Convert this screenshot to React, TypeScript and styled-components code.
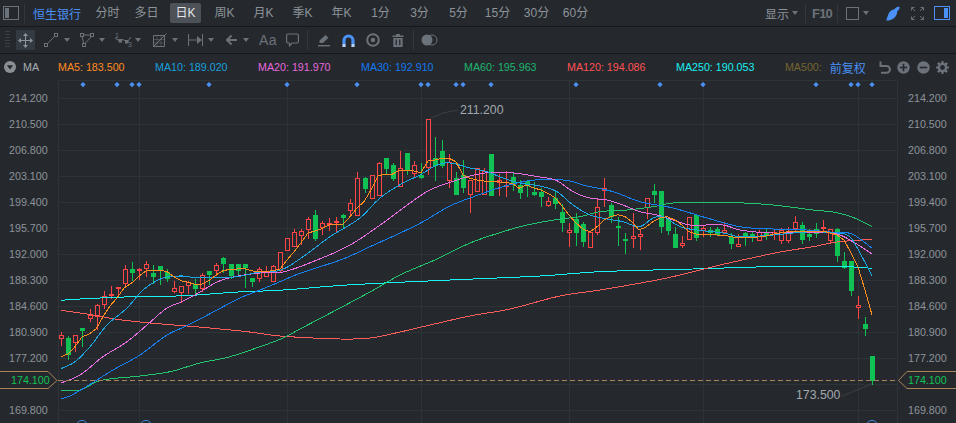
import React from 'react';
import styled, { createGlobalStyle } from 'styled-components';

const FONT = '"Liberation Sans", "Noto Sans CJK SC", Arial, sans-serif';
const BG = '#25292e';
const RULE = '#16181b';
const MUTED = '#8d9399';
const ICON = '#6c7279';
const BLUE = '#4a90f5';
const RED = '#ff4545';
const GREEN = '#10c254';

const Global = createGlobalStyle`
  html, body { margin: 0; padding: 0; background: ${BG}; }
  body { font-family: ${FONT}; overflow: hidden; }
`;

const Page = styled.div`
  position: relative;
  width: 956px;
  height: 423px;
  overflow: hidden;
  display: flex;
  flex-direction: column;
  background: ${BG};
  color: ${MUTED};
`;

const TopBar = styled.header`
  flex: 0 0 27px;
  box-sizing: border-box;
  display: flex;
  align-items: center;
  border-bottom: 1px solid ${RULE};
  padding-left: 3px;
  font-size: 12px;
`;

const PanelIcon = styled.svg<{ $left?: number }>`
  display: block;
  flex: none;
  margin-left: ${p => p.$left ?? 0}px;
`;

const Divider = styled.span<{ $left?: number; $right?: number }>`
  flex: none;
  width: 1px;
  height: 19px;
  background: #33383e;
  margin-left: ${p => p.$left ?? 0}px;
  margin-right: ${p => p.$right ?? 0}px;
`;

const StockName = styled.span`
  color: ${BLUE};
  width: 59px;
  flex: none;
`;

const Tabs = styled.nav`
  display: flex;
  gap: 8px;
`;

const Tab = styled.span<{ $active?: boolean }>`
  width: 31px;
  height: 20px;
  line-height: 20px;
  text-align: center;
  border-radius: 2px;
  white-space: nowrap;
  background: ${p => (p.$active ? '#4c5258' : 'transparent')};
  color: ${p => (p.$active ? '#e4e6e9' : MUTED)};
`;

const TopRight = styled.div`
  margin-left: auto;
  display: flex;
  align-items: center;
  padding-right: 6px;
`;

const Caret = styled.span<{ $left?: number; $right?: number }>`
  flex: none;
  width: 0;
  height: 0;
  border-left: 3.5px solid transparent;
  border-right: 3.5px solid transparent;
  border-top: 4px solid ${ICON};
  margin-left: ${p => p.$left ?? 0}px;
  margin-right: ${p => p.$right ?? 0}px;
`;

const ShowLabel = styled.span`
  color: ${MUTED};
`;

const F10 = styled.b`
  color: ${ICON};
  font-size: 13px;
  letter-spacing: -0.8px;
  width: 19px;
  margin: 0 6px;
`;

const Swatch = styled.span`
  flex: none;
  box-sizing: border-box;
  width: 13px;
  height: 13px;
  border: 1px solid ${ICON};
  margin-left: 8px;
`;

const ToolStrip = styled.div`
  flex: 0 0 27px;
  box-sizing: border-box;
  display: flex;
  align-items: center;
  border-bottom: 1px solid ${RULE};
`;

const Grip = styled.span`
  flex: none;
  box-sizing: border-box;
  width: 16px;
  height: 18px;
  background: repeating-linear-gradient(to bottom, #3b4046 0 1px, transparent 1px 3px);
  background-size: 5px 100%;
  background-position: 5px 0;
  background-repeat: no-repeat;
`;

const ActiveTool = styled.span`
  flex: none;
  width: 19px;
  height: 20px;
  margin-right: 9px;
  display: flex;
  align-items: center;
  justify-content: center;
  background: #343a41;
`;

const Slot = styled.span<{ $w: number }>`
  flex: 0 0 ${p => p.$w}px;
  display: flex;
  align-items: center;
`;

const Aa = styled.span`
  color: ${ICON};
  font-size: 14px;
  letter-spacing: 0.4px;
`;

const Sep = styled.span<{ $w: number }>`
  flex: 0 0 ${p => p.$w}px;
  height: 20px;
  background: linear-gradient(#33383e, #33383e) left center / 1px 100% no-repeat;
`;

const Legend = styled.div`
  flex: 0 0 26px;
  display: flex;
  align-items: center;
  padding-left: 4px;
  font-size: 10.7px;
  white-space: nowrap;
`;

const LegendName = styled.span`
  color: #a9aeb4;
  margin-left: 7px;
  width: 35px;
  flex: none;
`;

const LegendItems = styled.div`
  display: flex;
  gap: 30.5px;
`;

const LegendItem = styled.span<{ $color: string }>`
  color: ${p => p.$color};
`;

const Adjust = styled.span`
  color: ${BLUE};
  font-size: 12px;
  margin-left: 8px;
  flex: none;
`;

const LegendTools = styled.div`
  display: flex;
  align-items: center;
  gap: 6.5px;
  margin-left: 13px;
`;

const ChartRow = styled.div`
  flex: 1;
  min-height: 0;
  display: flex;
`;

const Axis = styled.div<{ $side: 'left' | 'right' }>`
  flex: none;
  box-sizing: border-box;
  width: ${p => (p.$side === 'left' ? 58 : 58)}px;
  padding-top: 5px;
  padding-left: ${p => (p.$side === 'left' ? 9 : 10)}px;
  display: grid;
  grid-auto-rows: 26px;
  align-content: start;
  font-size: 10.7px;
  line-height: 26px;
  color: ${MUTED};
`;

const Plot = styled.svg`
  flex: none;
  display: block;
`;

const Note = styled.text`
  font-family: ${FONT};
  font-size: 12.3px;
  fill: #a1a7ad;
`;

const PriceTag = styled.div<{ $side: 'left' | 'right' }>`
  position: absolute;
  z-index: 1;
  top: 371px;
  ${p => (p.$side === 'left' ? 'left: 0;' : 'right: 0;')}
  width: 58px;
  height: 18px;
  font-size: 10.7px;
  line-height: 18px;
  color: ${GREEN};
  box-sizing: border-box;
  padding-left: ${p => (p.$side === 'left' ? 11 : 10)}px;
`;

const TagShape = styled.svg`
  position: absolute;
  inset: 0;
  z-index: -1;
`;

type Candle = [number, number, number, number, 'r' | 'g'];
const candles: Candle[] = [
  [335.3, 339.3, 332, 346, 'r'], [338, 355, 336, 360, 'g'], [334.7, 342.7, 334.7, 351.7, 'r'], [328, 331, 328, 347, 'g'],
  [314.7, 319.3, 309, 322, 'r'], [305, 317, 304, 330, 'r'], [295.7, 304.7, 291, 309, 'r'], [293.7, 295, 286, 299, 'r'],
  [286.7, 288.3, 286.7, 296, 'r'], [269.3, 284.3, 265, 286.7, 'r'], [269, 272.7, 262, 281, 'g'], [269.3, 271.3, 267.7, 280, 'r'],
  [264.3, 269.3, 261, 276.7, 'r'], [273, 277, 265, 284, 'g'], [266.3, 271.3, 266.3, 285, 'g'], [272.3, 278.7, 269, 281.7, 'g'],
  [288.3, 292, 281, 292.7, 'r'], [286.3, 293, 286, 302.7, 'r'], [282.3, 286.3, 280.7, 294, 'r'], [284.3, 289, 279, 294, 'g'],
  [275.3, 288.7, 272.7, 291.7, 'r'], [271.3, 275, 271, 285, 'g'], [265, 271.3, 263.3, 276.3, 'r'], [258, 264.3, 257.3, 273, 'g'],
  [264, 275.7, 264, 279, 'g'], [264, 270.7, 264, 276, 'g'], [264, 268.3, 264, 288, 'g'], [278.3, 282, 278, 287, 'g'],
  [268.7, 278.7, 267.3, 282, 'r'], [271.3, 276.7, 266, 276.7, 'r'], [266.3, 281.7, 265, 281.7, 'r'], [252.3, 270.7, 252.3, 272, 'r'],
  [238.3, 250.7, 238.3, 250.7, 'r'], [232.3, 246.7, 229, 246.7, 'r'], [231.3, 236.3, 229, 245, 'r'], [219.3, 229.7, 217.3, 239, 'r'],
  [215, 238.7, 210, 240.7, 'g'], [223.3, 227.7, 220.7, 235, 'r'], [222.7, 225, 218, 230.7, 'r'], [221.3, 222.5, 217, 233, 'r'],
  [215, 217.7, 214, 227.7, 'g'], [203.3, 211.3, 199, 215, 'r'], [178.3, 215.7, 172, 215.7, 'r'], [178, 188.7, 177, 192.7, 'g'],
  [175.3, 198.7, 175.3, 198.7, 'r'], [163.3, 195.7, 161.7, 195.7, 'r'], [158.3, 168.7, 158.3, 174, 'g'], [165.3, 179, 162.7, 181, 'g'],
  [167.7, 187.3, 151, 187.3, 'r'], [153.3, 171.3, 153.3, 175, 'g'], [165.3, 174.3, 161, 178.3, 'r'], [175.3, 178, 162.7, 179.3, 'g'],
  [119.3, 168.3, 119.3, 175, 'r'], [158, 165.7, 137, 181, 'g'], [151, 165.7, 140, 168.3, 'g'], [161.7, 181, 154.3, 188, 'r'],
  [178, 195, 172, 195, 'g'], [175.3, 188, 160, 193.3, 'g'], [180, 195, 180, 212.7, 'r'], [168.3, 191.7, 168.3, 191.7, 'r'],
  [170.7, 195, 168.3, 195, 'r'], [154, 196, 154, 196, 'g'], [180, 183.3, 174, 196, 'r'], [185.3, 187, 170.7, 196.7, 'r'],
  [177.3, 185, 171.7, 191, 'g'], [185, 192.7, 180, 199, 'g'], [181.3, 186, 181, 196.7, 'g'], [192.3, 195.3, 181.7, 196, 'g'],
  [191.7, 196.7, 188, 206.7, 'g'], [200.7, 205.7, 196.7, 206.7, 'r'], [198, 204, 191.7, 208.7, 'g'], [212.3, 222.7, 204, 231.7, 'g'],
  [230.3, 233.3, 222.7, 246.7, 'r'], [219.3, 232.7, 213, 246, 'g'], [224.3, 242, 222.3, 246.7, 'g'], [231.7, 247.7, 231.7, 247.7, 'r'],
  [207.3, 232.7, 199, 235, 'r'], [188.3, 191.3, 178, 206.7, 'r'], [205.3, 217, 203, 223, 'g'], [225.5, 226.5, 216.7, 246, 'g'],
  [238.5, 239.5, 233.3, 254, 'g'], [236.3, 238.7, 213.3, 248.3, 'r'], [234.3, 236.7, 230, 250, 'r'], [198.3, 208.3, 198.3, 219, 'r'],
  [191, 195, 184, 203.3, 'g'], [191, 227, 191, 232.7, 'g'], [219, 231, 216.7, 235, 'g'], [234, 247.7, 227.3, 247.7, 'g'],
  [243.3, 246, 236, 247.7, 'r'], [217.3, 240.3, 217.3, 240.3, 'r'], [214.7, 238.3, 214.7, 240.7, 'g'], [228.3, 230.7, 225, 236.7, 'r'],
  [230, 233, 226.7, 236.7, 'g'], [229.3, 234.7, 226.7, 234.7, 'g'], [230, 233.3, 221.7, 233.3, 'r'], [237, 243.7, 233.3, 248.7, 'g'],
  [243.7, 247.3, 234.3, 247.3, 'r'], [233.3, 238.3, 231.7, 246, 'g'], [234, 236.7, 230.7, 241.7, 'g'], [231.7, 240.7, 230, 240.7, 'r'],
  [231.7, 236, 229.3, 240, 'g'], [231.7, 235.3, 229.3, 240, 'r'], [230, 240.7, 228, 244, 'r'], [232, 240.7, 226.7, 242.7, 'r'],
  [221.7, 229.3, 216, 231.7, 'r'], [225, 240, 221.7, 244, 'g'], [234.3, 237, 229.3, 240.7, 'g'], [229.3, 233.7, 222.7, 238.3, 'g'],
  [227.3, 228.7, 220, 231.7, 'r'], [229.3, 240.7, 229.3, 244, 'r'], [229.3, 255.7, 228.3, 261.7, 'g'], [261, 268.3, 252.3, 269.3, 'g'],
  [261, 291, 261, 296, 'g'], [305.3, 307.7, 296, 318.7, 'r'], [324, 328.7, 317.3, 336, 'g'], [356, 380.7, 356, 385, 'g'],
];

type Pt = [number, number];

// The averages are read off at a few anchors; sample them once per candle so the curves stay smooth.
const smooth = (pts: Pt[]): Pt[] => {
  const out: Pt[] = [];
  for (let i = 0; i < pts.length - 1; i++) {
    const p0 = pts[Math.max(0, i - 1)];
    const p1 = pts[i];
    const p2 = pts[i + 1];
    const p3 = pts[Math.min(pts.length - 1, i + 2)];
    const m1 = (p2[1] - p0[1]) / (p2[0] - p0[0] || 1);
    const m2 = (p3[1] - p1[1]) / (p3[0] - p1[0] || 1);
    const dx = p2[0] - p1[0];
    const n = Math.max(1, Math.round(dx / 4));
    for (let k = 0; k < n; k++) {
      const t = k / n;
      const t2 = t * t;
      const t3 = t2 * t;
      const y = (2 * t3 - 3 * t2 + 1) * p1[1] + (t3 - 2 * t2 + t) * dx * m1 + (-2 * t3 + 3 * t2) * p2[1] + (t3 - t2) * dx * m2;
      out.push([p1[0] + dx * t, y]);
    }
  }
  out.push(pts[pts.length - 1]);
  return out;
};

const ma5: Pt[] = [[61,356.7],[68,354],[75,346.7],[82,337],[89,334],[96,329],[103,316.7],[110,306],[117,298],[124,288],[132,282.7],[139,276],[146,271],[153,270],[160,270],[167,271.7],[174,276.7],[181,280.7],[188,282.3],[195,284.3],[202,284],[209,280.7],[216,275],[223,270.7],[230,269.3],[237,269],[244,268.3],[251,270.7],[258,272],[267,271.3],[274,270.7],[280,269],[287,260],[294,251.7],[301,242.7],[308,233],[315,231],[322,228.7],[329,225],[336,224.3],[343,224],[350,216.7],[357,208],[364,201.7],[371,190],[378,176],[385,174],[392,174.3],[400,170],[407,170.7],[414,171],[421,172.7],[428,160.7],[435,160],[442,158.3],[449,158.3],[456,161.7],[463,175],[470,178.3],[477,180],[484,181],[491,181.7],[498,181.7],[505,182.7],[512,183.3],[519,188.3],[526,185],[533,187.7],[541,190],[548,193.3],[555,197.7],[562,206],[569,215],[576,223],[583,229],[590,232],[597,226.7],[604,220],[611,216.7],[618,214.7],[625,216.7],[632,221.7],[639,230],[646,227],[653,221.7],[660,218],[667,216.7],[675,220],[682,225],[689,231.7],[696,234],[703,235],[710,234],[717,235],[724,235],[731,236.7],[738,237.7],[752,237.7],[766,236],[780,232.7],[794,231],[808,231],[823,231],[837,235],[844,240],[851,253],[858,267],[865,290],[872,315]];
const ma10: Pt[] = [[61,368.7],[75,361.7],[90,346.7],[107,325],[127,308],[143,290],[163,278],[183,276],[195,277.7],[216,277.7],[237,276.7],[258,272.3],[281,270],[303,256.7],[330,236.7],[360,218],[380,198],[403,183],[420,175],[437,165],[450,163],[470,168],[487,171.7],[503,178],[520,183],[540,186],[557,191.7],[573,205],[590,215],[607,219],[623,221.7],[640,226.7],[653,218],[663,216.7],[680,226.7],[697,230],[723,233],[740,236.7],[773,235],[807,232],[837,233],[850,236.7],[860,253],[872,275.7]];
const ma20: Pt[] = [[61,383],[80,375],[103,356.7],[127,341.7],[147,325],[167,308],[182,301.7],[200,292],[217,282],[233,277],[260,273],[283,272],[317,260],[350,245],[383,223],[410,203],[430,190],[457,180],[483,173.3],[510,172.7],[540,177],[557,180.7],[573,191.7],[590,198],[607,200],[623,205],[640,211.7],[657,215],[673,220],[690,225],[723,225],[740,230],[773,233],[807,232],[837,234],[855,243],[872,254]];
const ma30: Pt[] = [[61,399],[72,395],[97,380],[113,370],[140,355],[167,335],[187,325.7],[217,310],[240,298],[260,290],[280,281.7],[300,273.3],[343,259],[370,246.7],[403,231.7],[423,221.7],[450,206],[483,193.3],[503,186.7],[527,181],[550,179.3],[570,181],[583,185],[613,191.7],[640,201.7],[673,208],[707,218],[740,226.7],[773,229],[807,230],[837,232.7],[852,234],[872,248]];
const ma60: Pt[] = [[61,391],[80,390],[100,380.7],[140,376],[170,371.7],[200,363],[230,356.7],[260,346.7],[283,338],[300,329],[340,308],[370,292],[400,275],[437,259],[470,243],[503,231.7],[527,225],[560,219],[580,216.7],[600,211.7],[627,210],[653,206.7],[673,203],[700,202.3],[737,202.7],[773,205],[813,210],[837,212.7],[857,219],[872,226.7]];
const ma120: Pt[] = [[61,310.3],[93,315],[117,319.3],[150,323],[187,326],[217,328.7],[247,331.7],[277,335.7],[300,337.3],[340,339],[370,338],[400,332],[430,325],[470,316],[510,309],[560,296],[600,290],[662,279],[693,271.7],[720,265],[753,257.7],[780,252],[813,246.7],[837,242],[872,239.3]];
const ma250: Pt[] = [[61,300.3],[80,299],[133,296.7],[185,295.7],[233,292.3],[283,290],[347,285],[450,280],[540,276],[600,271.7],[693,269],[770,266.7],[840,266.3],[872,268.3]];

const lines: { pts: Pt[]; color: string }[] = [
  { pts: smooth(ma250), color: '#18f2f2' },
  { pts: smooth(ma120), color: '#ff5c5c' },
  { pts: smooth(ma60), color: '#22c46e' },
  { pts: smooth(ma30), color: '#1681f2' },
  { pts: smooth(ma20), color: '#e86fe0' },
  { pts: smooth(ma10), color: '#1ba6e6' },
  { pts: ma5, color: '#ff9020' },
];

const legendItems = [
  ['MA5: 183.500', '#ff8a1f'],
  ['MA10: 189.020', '#1a9fdc'],
  ['MA20: 191.970', '#e468dc'],
  ['MA30: 192.910', '#1478ee'],
  ['MA60: 195.963', '#1fb56e'],
  ['MA120: 194.086', '#ff5252'],
  ['MA250: 190.053', '#18eeee'],
  ['MA500:', '#76642f'],
];

const tabs = ['分时', '多日', '日K', '周K', '月K', '季K', '年K', '1分', '3分', '5分', '15分', '30分', '60分'];
const prices = ['214.200', '210.500', '206.800', '203.100', '199.400', '195.700', '192.000', '188.300', '184.600', '180.900', '177.200', '', '169.800'];
const gridY = [98, 124, 150, 176, 202, 228, 254, 280, 306, 332, 358, 384, 410];
const gridX = [58, 139, 287, 421, 569, 703, 858];
const dots = [83, 117, 132, 139, 209, 287, 357, 421, 428, 456, 463, 491, 576, 660, 703, 816, 851, 858, 872];
const splitMarks = [82, 146, 872];

const Axes = ({ side }: { side: 'left' | 'right' }) => (
  <Axis $side={side}>
    {prices.map((p, i) => (
      <span key={i}>{p}</span>
    ))}
  </Axis>
);

const Chart = () => (
  <Plot width={840} height={343} viewBox="58 80 840 343">
    <g shapeRendering="crispEdges" stroke="#2e3338" strokeWidth={1}>
      <line x1={58} x2={898} y1={80.5} y2={80.5} />
      {gridY.map(y => (
        <line key={y} x1={58} x2={898} y1={y + 0.5} y2={y + 0.5} />
      ))}
      {gridX.map(x => (
        <line key={x} x1={x + 0.5} x2={x + 0.5} y1={80} y2={423} />
      ))}
      <line x1={897.5} x2={897.5} y1={80} y2={423} />
    </g>
    {dots.map(x => (
      <path key={x} d={`M${x} 82 l2.6 2.6 -2.6 2.6 -2.6 -2.6z`} fill={BLUE} />
    ))}
    <g shapeRendering="crispEdges">
      {candles.map(([t, b, wt, wb, c], i) => {
        const x = Math.round(61.3 + 7.052 * i);
        const color = c === 'r' ? RED : GREEN;
        const top = Math.round(t);
        const bottom = Math.max(Math.round(b), top + 2);
        return (
          <g key={i}>
            <line x1={x + 0.5} x2={x + 0.5} y1={Math.round(wt)} y2={top} stroke={color} />
            <line x1={x + 0.5} x2={x + 0.5} y1={bottom} y2={Math.round(wb)} stroke={color} />
            {c === 'r' ? (
              <rect x={x - 1.5} y={top + 0.5} width={4} height={bottom - top - 1} fill={BG} stroke={color} />
            ) : (
              <rect x={x - 2} y={top} width={5} height={bottom - top} fill={color} />
            )}
          </g>
        );
      })}
    </g>
    <g fill="none" shapeRendering="crispEdges">
      {lines.map(l => (
        <polyline key={l.color} points={l.pts.map(p => p.join(',')).join(' ')} stroke={l.color} strokeWidth={1} />
      ))}
    </g>
    <line x1={58} x2={898} y1={380.5} y2={380.5} stroke="#a9855c" strokeDasharray="5 3" shapeRendering="crispEdges" />
    <path d="M431 118 L443 113 L458 110" stroke="#3b4046" fill="none" />
    <path d="M842 396 L872 384" stroke="#3b4046" fill="none" />
    <Note x={460} y={114}>211.200</Note>
    <Note x={796} y={399}>173.500</Note>
    {splitMarks.map(x => (
      <circle key={x} cx={x} cy={426} r={5.6} fill="none" stroke="#3f86d8" />
    ))}
  </Plot>
);

const LineTool = () => (
  <svg width="14" height="14" viewBox="0 0 14 14" fill="none" stroke={ICON}>
    <rect x="0.5" y="10.5" width="3" height="3" />
    <rect x="10.5" y="0.5" width="3" height="3" />
    <path d="M3.5 10.5 L10.5 3.5" />
  </svg>
);
const PolyTool = () => (
  <svg width="14" height="14" viewBox="0 0 14 14" fill="none" stroke={ICON}>
    <rect x="0.5" y="0.5" width="3" height="3" />
    <rect x="10.5" y="0.5" width="3" height="3" />
    <rect x="2.5" y="10.5" width="3" height="3" />
    <path d="M3.5 2 H10.5 M2 3.5 L3.8 10.5 M11.5 3.5 L5 10.5" />
  </svg>
);
const WaveTool = () => (
  <svg width="18" height="16" viewBox="0 0 18 16" fill="none" stroke={ICON}>
    <text x="0" y="6" fontSize="7" fill={ICON} stroke="none" fontFamily="Liberation Sans">1</text>
    <text x="13" y="15" fontSize="7" fill={ICON} stroke="none" fontFamily="Liberation Sans">3</text>
    <path d="M0 6 L5 9 L8 7.5 L12 10 L16 5" />
    <rect x="4" y="7.5" width="2.5" height="2.5" fill={ICON} />
    <rect x="10.5" y="8.5" width="2.5" height="2.5" fill={ICON} />
  </svg>
);
const FibTool = () => (
  <svg width="16" height="16" viewBox="0 0 16 16" fill="none" stroke={ICON}>
    <path d="M1.5 3.5 V14.5 H12.5 V3.5 H1.5" />
    <path d="M1.5 14.5 L14.5 1.5" />
    <path d="M1.5 7.5 H12.5 M1.5 11 H12.5 M5 3.5 V14.5 M9 3.5 V14.5" strokeDasharray="1 1" />
  </svg>
);
const MeasureTool = () => (
  <svg width="15" height="12" viewBox="0 0 15 12" fill="none" stroke={ICON}>
    <path d="M0.5 0 V12 M14.5 0 V12 M1 6 H10" />
    <path d="M9 2 L14 6 L9 10Z" fill={ICON} stroke="none" />
  </svg>
);
const BackArrow = () => (
  <svg width="12" height="12" viewBox="0 0 12 12" fill="none" stroke={ICON} strokeWidth="2">
    <path d="M12 6 H2 M6.5 1.5 L2 6 L6.5 10.5" />
  </svg>
);
const Comment = () => (
  <svg width="13" height="14" viewBox="0 0 13 14" fill="none" stroke={ICON} strokeWidth="1.2">
    <path d="M2 1 H11 Q12.4 1 12.4 2.4 V8.6 Q12.4 10 11 10 H6 L3.5 13 V10 H2 Q0.6 10 0.6 8.6 V2.4 Q0.6 1 2 1Z" />
  </svg>
);
const Pencil = () => (
  <svg width="12" height="13" viewBox="0 0 12 13" fill={ICON}>
    <path d="M7.5 1 L10.5 3.8 L5 9 H1.5 V6.6Z" />
    <rect x="0" y="11" width="12" height="1.4" />
  </svg>
);
const Magnet = () => (
  <svg width="13" height="13" viewBox="0 0 13 13" fill="none">
    <path d="M2 10 V6.5 A4.5 4.5 0 0 1 11 6.5 V10" stroke={BLUE} strokeWidth="3.2" />
    <path d="M0.4 10 H3.6 V13 H0.4Z M9.4 10 H12.6 V13 H9.4Z" fill="#b8d2f7" />
  </svg>
);
const Eye = () => (
  <svg width="14" height="14" viewBox="0 0 14 14" fill="none">
    <circle cx="7" cy="7" r="5.8" stroke={ICON} strokeWidth="2" />
    <circle cx="7" cy="7" r="2.2" fill={ICON} />
  </svg>
);
const Trash = () => (
  <svg width="12" height="13" viewBox="0 0 12 14" fill={ICON}>
    <path d="M4 0 H8 V1.5 H12 V3.2 H0 V1.5 H4Z" />
    <path d="M1 4.2 H11 V14 H1Z M3.4 6 V12 H4.8 V6Z M7.2 6 V12 H8.6 V6Z" fillRule="evenodd" />
  </svg>
);
const ToggleCircles = () => (
  <svg width="17" height="12" viewBox="0 0 17 12">
    <circle cx="6" cy="6" r="5.5" fill={ICON} />
    <circle cx="11" cy="6" r="5" fill="none" stroke={ICON} />
  </svg>
);
const MoveTool = () => (
  <svg width="15" height="15" viewBox="0 0 15 15" fill="#8d949b" stroke="#8d949b">
    <path d="M7.5 2 V13 M2 7.5 H13" fill="none" />
    <path d="M7.5 0 L10 3 H5Z M7.5 15 L10 12 H5Z M0 7.5 L3 5 V10Z M15 7.5 L12 5 V10Z" stroke="none" />
  </svg>
);

const Undo = () => (
  <svg width="12" height="13" viewBox="0 0 12 13" fill="none" stroke={ICON} strokeWidth="2">
    <path d="M1.5 0.5 V5 H6 M1.5 5 H7.5 A3.4 3.4 0 0 1 7.5 11.8 H2" />
  </svg>
);
const RoundBtn = ({ plus }: { plus?: boolean }) => (
  <svg width="13" height="13" viewBox="0 0 13 13">
    <circle cx="6.5" cy="6.5" r="6.2" fill={ICON} />
    <path d={plus ? 'M2.8 6.5 H10.2 M6.5 2.8 V10.2' : 'M2.8 6.5 H10.2'} stroke={BG} strokeWidth="1.7" />
  </svg>
);
const Gear = () => (
  <svg width="13" height="13" viewBox="0 0 13 13">
    <circle cx="6.5" cy="6.5" r="3.6" fill="none" stroke={ICON} strokeWidth="2.4" />
    <path
      d="M6.5 0 V2.5 M6.5 10.5 V13 M0 6.5 H2.5 M10.5 6.5 H13 M1.9 1.9 L3.7 3.7 M9.3 9.3 L11.1 11.1 M1.9 11.1 L3.7 9.3 M9.3 3.7 L11.1 1.9"
      stroke={ICON}
      strokeWidth="2.2"
    />
  </svg>
);

const App = () => (
  <>
    <Global />
    <Page>
      <TopBar>
        <PanelIcon width="16" height="14" viewBox="0 0 16 14" fill="none" stroke={ICON}>
          <rect x="0.5" y="0.5" width="15" height="13" />
          <rect x="2" y="2" width="4" height="10" fill={ICON} stroke="none" />
        </PanelIcon>
        <Divider $left={5} $right={8} />
        <StockName>恒生银行</StockName>
        <Tabs>
          {tabs.map(t => (
            <Tab key={t} $active={t === '日K'}>{t}</Tab>
          ))}
        </Tabs>
        <TopRight>
          <ShowLabel>显示</ShowLabel>
          <Caret $left={3} $right={7} />
          <Divider />
          <F10>F10</F10>
          <Divider />
          <Swatch />
          <Caret $left={4} $right={17} />
          <PanelIcon width="14" height="15" viewBox="0 0 14 15" fill={BLUE}>
            <path d="M13.6 1 C13.6 3 12.6 4.4 11.2 5 C11.6 8.6 8.6 13 4.4 14 C2.6 14.5 1 14.6 0.2 14.4 C0.8 13 1.2 11.4 2 9 C3 5.8 5.6 3.4 8.6 3.2 C9.6 1.4 11.6 0.2 13.6 1Z" />
          </PanelIcon>
          <PanelIcon $left={11} width="13" height="13" viewBox="0 0 13 13" fill="none" stroke={ICON}>
            <path d="M0.5 3.5 V0.5 H3.5 M9.5 0.5 H12.5 V3.5 M12.5 9.5 V12.5 H9.5 M3.5 12.5 H0.5 V9.5 M1 1 L4 4 M12 1 L9 4 M12 12 L9 9 M1 12 L4 9" />
          </PanelIcon>
          <PanelIcon $left={10} width="16" height="14" viewBox="0 0 16 14" fill="none" stroke={BLUE}>
            <rect x="0.5" y="0.5" width="15" height="13" />
            <rect x="10" y="2" width="4" height="10" fill={BLUE} stroke="none" />
          </PanelIcon>
        </TopRight>
      </TopBar>

      <ToolStrip>
        <Grip />
        <ActiveTool><MoveTool /></ActiveTool>
        <Slot $w={36}><LineTool /><Caret $left={6} /></Slot>
        <Slot $w={35}><PolyTool /><Caret $left={5} /></Slot>
        <Slot $w={37}><WaveTool /><Caret $left={2} /></Slot>
        <Slot $w={36}><FibTool /><Caret $left={4} /></Slot>
        <Slot $w={37}><MeasureTool /><Caret $left={5} /></Slot>
        <Slot $w={34}><BackArrow /><Caret $left={6} /></Slot>
        <Slot $w={27}><Aa>Aa</Aa></Slot>
        <Slot $w={21}><Comment /></Slot>
        <Sep $w={11} />
        <Slot $w={24}><Pencil /></Slot>
        <Slot $w={24}><Magnet /></Slot>
        <Slot $w={26}><Eye /></Slot>
        <Slot $w={21}><Trash /></Slot>
        <Sep $w={8} />
        <Slot $w={17}><ToggleCircles /></Slot>
      </ToolStrip>

      <Legend>
        <svg width="12" height="12" viewBox="0 0 12 12">
          <circle cx="6" cy="6" r="6" fill="#8a9096" />
          <path d="M2.8 4.2 H9.2 L6 8.6Z" fill={BG} />
        </svg>
        <LegendName>MA</LegendName>
        <LegendItems>
          {legendItems.map(([text, color]) => (
            <LegendItem key={text} $color={color}>{text}</LegendItem>
          ))}
        </LegendItems>
        <Adjust>前复权</Adjust>
        <LegendTools>
          <Undo />
          <RoundBtn plus />
          <RoundBtn />
          <Gear />
        </LegendTools>
      </Legend>

      <ChartRow>
        <Axes side="left" />
        <Chart />
        <Axes side="right" />
      </ChartRow>

      <PriceTag $side="left">
        174.100
        <TagShape width="58" height="18" viewBox="0 0 58 18" fill={BG} stroke="#a9855c">
          <path d="M-1 0.5 H48 L57 9.5 L48 17.5 H-1Z" />
        </TagShape>
      </PriceTag>
      <PriceTag $side="right">
        174.100
        <TagShape width="58" height="18" viewBox="0 0 58 18" fill={BG} stroke="#a9855c">
          <path d="M59 0.5 H9 L0.5 9.5 L9 17.5 H59Z" />
        </TagShape>
      </PriceTag>
    </Page>
  </>
);

export default App;
